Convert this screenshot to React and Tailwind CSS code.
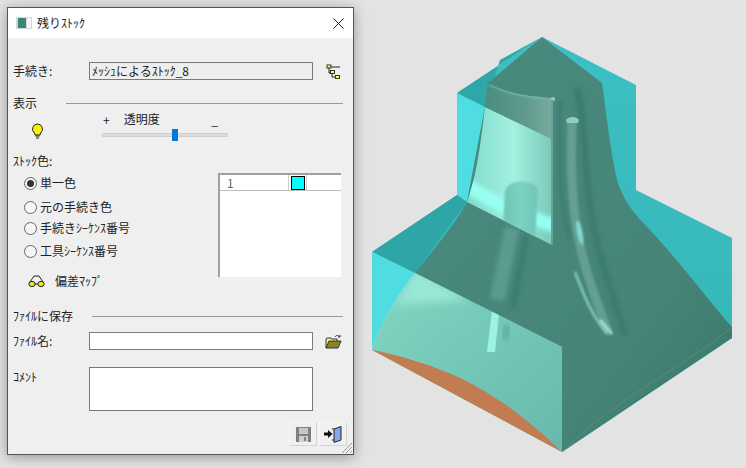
const font = { fontFamily: '"Noto Sans CJK JP", "Noto Sans CJK SC", sans-serif' }

const radios = [
  { label: '単一色', checked: true, cls: 'mt-[2px]' },
  { label: '元の手続き色', cls: 'mt-[8px]' },
  { label: '手続きｼｰｹﾝｽ番号', cls: 'mt-[5px]' },
  { label: '工具ｼｰｹﾝｽ番号', cls: 'mt-[7px]' },
]

function Radio({ label, checked, cls }) {
  return (
    <div className={`flex items-center h-4 ml-[11px] ${cls}`}>
      <div className="w-[13px] h-[13px] rounded-full border border-[#666] bg-[#f6f6f6] flex items-center justify-center">
        {checked && <div className="w-[7px] h-[7px] rounded-full bg-[#333]"></div>}
      </div>
      <span className="ml-[3px]">{label}</span>
    </div>
  )
}

function TreeIcon() {
  return (
    <svg width="16" height="16" viewBox="0 0 16 16" className="block">
      <path d="M3 4V9H6M6 9V13H9M5 3H14" stroke="#222" fill="none" />
      <rect x="1" y="1" width="4" height="3" fill="#ffff44" stroke="#222" strokeWidth="0.9" />
      <rect x="4.5" y="6.5" width="4" height="3" fill="#ffff44" stroke="#222" strokeWidth="0.9" />
      <rect x="9.5" y="11.5" width="4" height="3" fill="#ffff44" stroke="#222" strokeWidth="0.9" />
    </svg>
  )
}

function BulbIcon() {
  return (
    <svg width="13" height="17" viewBox="0 0 13 17" className="block">
      <path d="M6.5 1a5 5 0 0 0-3 9l.5 2h5l.5-2a5 5 0 0 0-3-9z" fill="#f5f500" stroke="#222" />
      <path d="M4.5 13h4M5 15h3" stroke="#222" strokeWidth="1.2" />
    </svg>
  )
}

function GlassesIcon() {
  return (
    <svg width="17" height="14" viewBox="0 0 17 14" className="block">
      <path d="M2 8 6 2H11L15 8" stroke="#222" fill="none" />
      <ellipse cx="4" cy="10" rx="3.2" ry="2.6" fill="#e8e820" stroke="#222" />
      <ellipse cx="13" cy="10" rx="3.2" ry="2.6" fill="#e8e820" stroke="#222" />
      <path d="M7 10h3" stroke="#222" />
    </svg>
  )
}

function FolderIcon() {
  return (
    <svg width="17" height="15" viewBox="0 0 17 15" className="block">
      <path d="M1 14V5L2 4H6L7 5H12V7" fill="#f3ee9b" stroke="#333" />
      <path d="M1 14 4 7H16L13 14Z" fill="#8a8420" stroke="#333" />
      <path d="M10 3C11 1 13 1 15 3M15 1V3H13" stroke="#333" fill="none" />
    </svg>
  )
}

function SaveIcon() {
  return (
    <svg width="15" height="15" viewBox="0 0 15 15" className="block">
      <rect width="15" height="15" fill="#808080" />
      <rect x="3" y="1" width="9" height="6" fill="#c8c8c8" />
      <rect x="3" y="9" width="9" height="6" fill="#d0d0d0" />
      <rect x="8" y="10" width="2" height="4" fill="#808080" />
    </svg>
  )
}

function ExitIcon() {
  return (
    <svg width="18" height="17" viewBox="0 0 18 17" className="block">
      <path d="M10 3 17 .5V14L10 16.5Z" fill="#86a8ea" stroke="#222" />
      <path d="M10 3H8M10 14H8" stroke="#222" />
      <path d="M0 6.5H4V4L8.5 8 4 12V9.500H0Z" fill="#111" />
    </svg>
  )
}

function Solid() {
  return (
    <svg width="386" height="468" viewBox="360 0 386 468" className="block ml-[6px] shrink-0">
      <defs>
        <linearGradient id="rightCyan" x1="0" y1="0" x2="0" y2="1">
          <stop offset="0" stopColor="#3cc0c4" />
          <stop offset="1" stopColor="#35b4b6" />
        </linearGradient>
        <linearGradient id="upperLight" x1="0" y1="0" x2="1" y2="0">
          <stop offset="0" stopColor="#7fdccb" />
          <stop offset="0.55" stopColor="#a4f0e1" />
          <stop offset="1" stopColor="#79c9b9" />
        </linearGradient>
        <linearGradient id="lowerLight" x1="0" y1="0" x2="1" y2="1">
          <stop offset="0" stopColor="#82d8c4" />
          <stop offset="0.45" stopColor="#74c9b8" />
          <stop offset="1" stopColor="#68b9ad" />
        </linearGradient>
        <linearGradient id="darkBody" x1="0" y1="0" x2="1" y2="1">
          <stop offset="0" stopColor="#4a8a7e" />
          <stop offset="0.7" stopColor="#468478" />
          <stop offset="1" stopColor="#38756a" />
        </linearGradient>
        <linearGradient id="fillet" x1="0" y1="0" x2="1" y2="0">
          <stop offset="0" stopColor="#4a8d80" />
          <stop offset="0.6" stopColor="#5f9a8d" />
          <stop offset="1" stopColor="#7aac9f" />
        </linearGradient>
        <linearGradient id="ribTop" x1="0" y1="0" x2="1" y2="0">
          <stop offset="0" stopColor="#6cc4b5" />
          <stop offset="0.5" stopColor="#7cd2c2" />
          <stop offset="1" stopColor="#70c6b7" />
        </linearGradient>
        <filter id="b1" x="-30%" y="-30%" width="160%" height="160%"><feGaussianBlur stdDeviation="1" /></filter>
        <filter id="b2" x="-50%" y="-30%" width="200%" height="160%"><feGaussianBlur stdDeviation="2" /></filter>
        <filter id="b4" x="-50%" y="-50%" width="200%" height="200%"><feGaussianBlur stdDeviation="4" /></filter>
        <clipPath id="upperFace"><path d="M485 107 552 139V245L467 202C477 175 481 140 485 107Z" /></clipPath>
        <clipPath id="lowerFace"><path d="M415 273 562 347V452L372 350C380 325 395 298 415 273Z" /></clipPath>
        <clipPath id="filletFace"><path d="M488 83C505 93 530 97 553 98L552 139 485 107Z" /></clipPath>
      </defs>

      {/* cyan block */}
      <path d="M542 37 636 85V190L732 238V338L562 452V347L372 252 457 195V93Z" fill="url(#rightCyan)" />
      <path d="M542 37 457 93 485 107 500 60Z" fill="#2fa6a8" />
      <path d="M457 93 485 107 467 202 457 195Z" fill="#4fdde2" />
      <path d="M457 195 372 252 415 273 467 202Z" fill="#2ea5a7" />
      <path d="M372 252 415 273C395 298 380 325 372 350Z" fill="#4fdde2" />

      {/* stock seen through the block */}
      <path
        d="M542 37 602 83C606 110 610 150 617 180C623 200 634 214 650 230C680 262 712 305 732 327V338L562 452V347L415 273C425 260 455 225 467 202L485 107 488 83Z"
        fill="url(#darkBody)"
      />
      <path d="M565 449C620 395 680 370 732 327" stroke="#7d8f7c" strokeOpacity="0.5" fill="none" />

      {/* left rib, seen through */}
      <path d="M512 228 497 300" stroke="#5a9c8f" strokeWidth="15" fill="none" filter="url(#b2)" />
      <path d="M526 236 513 308" stroke="#397a70" strokeWidth="5" fill="none" filter="url(#b2)" />

      {/* upper cut face */}
      <path d="M485 107 552 139V245L467 202C477 175 481 140 485 107Z" fill="url(#upperLight)" />
      <g clipPath="url(#upperFace)">
        <path d="M466 184C490 202 520 215 556 226" stroke="#96fff2" strokeWidth="14" fill="none" filter="url(#b2)" />
        <path d="M505 192C506 178 538 178 538 192L535 240 503 226Z" fill="url(#ribTop)" filter="url(#b1)" />
      </g>

      {/* fillet above the cut */}
      <path d="M488 83C505 93 530 97 553 98L552 139 485 107Z" fill="url(#fillet)" />
      <g clipPath="url(#filletFace)">
        <path d="M490 84C508 93 530 97 553 97" stroke="#6fbfae" strokeWidth="3" fill="none" filter="url(#b1)" />
      </g>
      <circle cx="553" cy="99" r="2" fill="#93cfc1" />

      {/* right rib */}
      <path d="M552 100V245" stroke="#65a598" strokeWidth="2" fill="none" />
      <path d="M560 100C557 160 560 205 570 240" stroke="#3f8074" strokeWidth="5" fill="none" filter="url(#b1)" />
      <path d="M576 88C587 115 582 180 596 238 606 280 620 315 625 335" stroke="#3a7a6e" strokeWidth="6" fill="none" filter="url(#b2)" />
      <path d="M572 119C570 170 572 210 580 245 586 275 598 305 608 332" stroke="#659f93" strokeWidth="9" fill="none" filter="url(#b1)" />
      <path d="M566 120C569 116 576 116 579 120L578 123H567Z" fill="#8ed0c0" />
      <path d="M576 222C579 216 584 232 583 245 579 245 576 232 576 222Z" fill="#7fd8d4" filter="url(#b1)" />
      <path d="M575 272C584 296 594 320 608 334" stroke="#85ccbd" strokeWidth="2.5" fill="none" filter="url(#b1)" />
      <path d="M600 320 612 334" stroke="#a2e4d4" strokeWidth="3" fill="none" filter="url(#b1)" />

      {/* lower cut face */}
      <path d="M415 273 562 347V452L372 350C380 325 395 298 415 273Z" fill="url(#lowerLight)" />
      <g clipPath="url(#lowerFace)">
        <path d="M395 305 470 300 415 270Z" fill="#97e8d5" filter="url(#b4)" />
        <path d="M508 325 504 340" stroke="#63b2a6" strokeWidth="8" fill="none" filter="url(#b2)" />
        <path d="M492 310 499 314 495 352 487 352Z" fill="#9df3e3" />
      </g>

      {/* brown remainder */}
      <path d="M372 350C400 355 450 370 477 387 510 405 540 430 562 452Z" fill="#c27c52" />
    </svg>
  )
}

export default function App() {
  return (
    <div className="w-[746px] h-[468px] overflow-hidden bg-[#e3e3e3] flex text-[12px] leading-4 text-[#222]" style={font}>
      <div className="relative w-[347px] h-[448px] ml-[7px] mt-[7px] shrink-0 border border-[#555] bg-[#efefef] shadow-[0_2px_12px_rgba(0,0,0,0.35)]">
        {/* title bar */}
        <div className="h-[30px] bg-white flex items-center pl-[8px] pr-[9px]">
          <svg width="16" height="12" viewBox="0 0 16 12" className="block">
            <rect width="16" height="12" fill="#cfdada" />
            <rect x="2" y="1" width="8" height="10" fill="#3d8478" />
            <rect x="11" y="1" width="4" height="10" fill="#f4f4f4" />
          </svg>
          <span className="ml-[5px]">残りｽﾄｯｸ</span>
          <svg width="11" height="11" viewBox="0 0 11 11" className="block ml-auto">
            <path d="M.5.5 10.5 10.5M10.5.5.5 10.5" stroke="#222" />
          </svg>
        </div>

        <div className="pl-[5px]">
          <div className="flex items-center h-[18px] mt-[24px]">
            <span className="w-[76px]">手続き:</span>
            <div className="w-[224px] h-[18px] border border-[#7a7a7a] bg-[#eeeeee] px-[2px] flex items-center">ﾒｯｼｭによるｽﾄｯｸ_8</div>
            <div className="ml-[13px] mt-[2px]"><TreeIcon /></div>
          </div>

          <div className="flex items-center h-4 mt-[15px]">
            <span className="w-[53px]">表示</span>
            <div className="w-[277px] h-px bg-[#999]"></div>
          </div>

          <div className="flex h-[32px]">
            <div className="ml-[18px] mt-[12px]"><BulbIcon /></div>
            <div className="ml-[58px] w-[126px]">
              <div className="flex h-4 relative">
                <span className="ml-[1px] mt-[1px]">+</span>
                <span className="ml-[14px]">透明度</span>
                <span className="ml-auto mr-[10px] mt-[1px]">_</span>
              </div>
              <div className="relative h-[12px] mt-[2px] flex items-center">
                <div className="w-full h-[4px] bg-[#dcdcdc] border border-[#d0d0d0]"></div>
                <div className="absolute left-[70px] top-0 w-[6px] h-[12px] bg-[#0078d7]"></div>
              </div>
            </div>
          </div>

          <div className="h-4 mt-[10px]">ｽﾄｯｸ色:</div>

          <div className="flex h-[116px] mt-[4px]">
            <div className="w-[205px]">
              {radios.map((r) => (
                <Radio key={r.label} {...r} />
              ))}
              <div className="flex items-center h-4 mt-[14px] ml-[15px]">
                <GlassesIcon />
                <span className="ml-[10px]">偏差ﾏｯﾌﾟ</span>
              </div>
            </div>
            <div className="w-[123px] h-[104px] bg-white border-t-2 border-l-2 border-[#a0a0a0]">
              <div className="flex h-[16px] border-b border-[#bdbdbd] text-[#666]">
                <div className="w-[69px] pl-[7px] border-r border-[#cfcfcf]">1</div>
                <div className="w-[18px] border-r border-[#cfcfcf] flex items-center justify-center">
                  <div className="w-[14px] h-[14px] bg-[#00ffff] border border-black"></div>
                </div>
              </div>
            </div>
          </div>

          <div className="flex items-center h-4 mt-[19px]">
            <span className="w-[79px]">ﾌｧｲﾙに保存</span>
            <div className="w-[251px] h-px bg-[#999]"></div>
          </div>

          <div className="flex items-center h-[18px] mt-[8px]">
            <span className="w-[76px]">ﾌｧｲﾙ名:</span>
            <div className="w-[224px] h-[18px] border border-[#7a7a7a] bg-white"></div>
            <div className="ml-[12px]"><FolderIcon /></div>
          </div>

          <div className="flex items-start mt-[17px]">
            <span className="w-[76px] mt-[2px]">ｺﾒﾝﾄ</span>
            <div className="w-[224px] h-[44px] border border-[#7a7a7a] bg-white"></div>
          </div>

          <div className="flex justify-end gap-[2px] mt-[11px] pr-[6px]">
            <div className="w-[28px] h-[24px] bg-[#f0f0f0] border border-t-[#f8f8f8] border-l-[#f8f8f8] border-r-[#d4d4d4] border-b-[#d4d4d4] flex items-center justify-center"><SaveIcon /></div>
            <div className="w-[28px] h-[24px] bg-[#f0f0f0] border border-t-[#f8f8f8] border-l-[#f8f8f8] border-r-[#d4d4d4] border-b-[#d4d4d4] flex items-center justify-center"><ExitIcon /></div>
          </div>
        </div>

        {/* resize grip */}
        <svg width="12" height="12" viewBox="0 0 12 12" className="absolute right-0 bottom-0">
          <path d="M11 1 1 11M11 5 5 11M11 9 9 11" stroke="#999" />
        </svg>
      </div>

      <Solid />
    </div>
  )
}
